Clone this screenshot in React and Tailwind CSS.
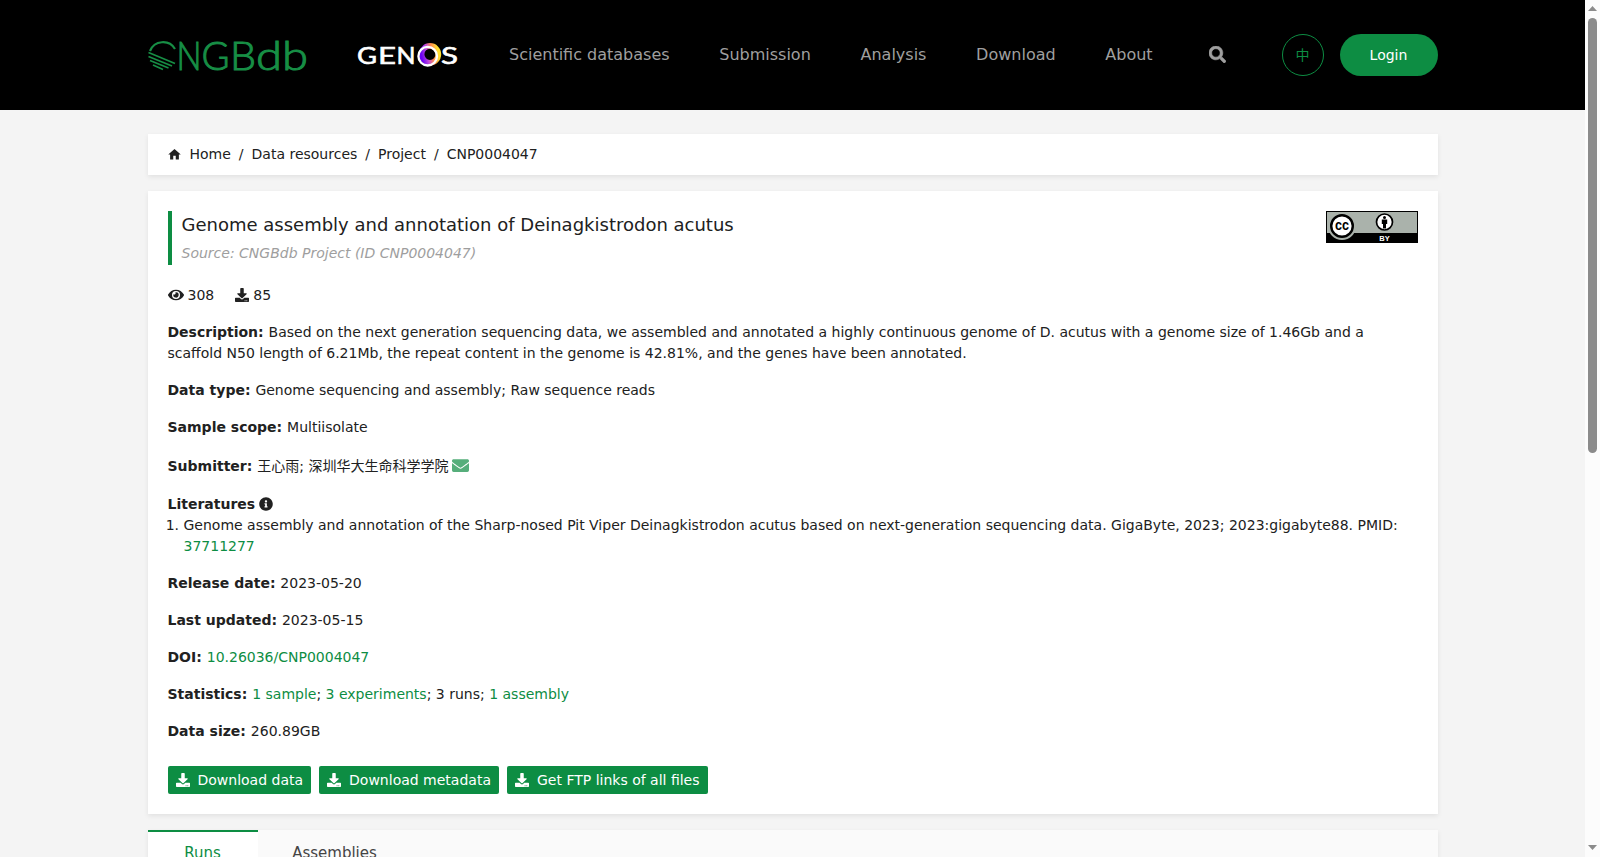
import { FaSearch, FaEye, FaDownload, FaEnvelope, FaInfoCircle } from 'react-icons/fa';
import { MdHome } from 'react-icons/md';

const navItems = ['Scientific databases', 'Submission', 'Analysis', 'Download', 'About'];
const crumbs = ['Home', 'Data resources', 'Project', 'CNP0004047'];
const downloads = ['Download data', 'Download metadata', 'Get FTP links of all files'];

function CngbLogo() {
  return (
    <svg className="h-[32px] w-[160px] shrink-0 overflow-visible" viewBox="0 0 160 32" aria-label="CNGBdb">
      <g fill="none" stroke="#178e45">
        <path strokeWidth="2.2" d="M2 12 A14 14 0 0 1 27 10" />
        <path strokeWidth="1.7" d="M0.500 13.500 L27 24.500 M0.500 17.500 L24 27 M2 21.500 L20.500 29 M5 26 L15 30.500" />
      </g>
      <g fill="#178e45" fontFamily="Lato" fontWeight="300" fontSize="40" stroke="#178e45" strokeWidth="1">
        <text x="28.5" y="31" textLength="25" lengthAdjust="spacingAndGlyphs">N</text>
        <text x="53.5" y="31" textLength="28" lengthAdjust="spacingAndGlyphs">G</text>
        <text x="82" y="31" textLength="26" lengthAdjust="spacingAndGlyphs">B</text>
        <text x="108" y="31" textLength="52" lengthAdjust="spacingAndGlyphs">db</text>
      </g>
    </svg>
  );
}

function GenosLogo() {
  return (
    <svg className="h-[28px] w-[101px] shrink-0 overflow-visible" viewBox="0 0 101 28" aria-label="GENOS">
      <defs>
        <linearGradient id="ring" x1="0" y1="0.6" x2="1" y2="0.4">
          <stop offset="0" stopColor="#6a00f4" />
          <stop offset="0.35" stopColor="#c04ad8" />
          <stop offset="0.65" stopColor="#ff8a50" />
          <stop offset="1" stopColor="#ffe030" />
        </linearGradient>
      </defs>
      <g fill="#fff" stroke="#fff" strokeWidth="0.6" fontFamily="Lato" fontWeight="400" fontSize="23.500">
        <text x="0" y="23" textLength="20" lengthAdjust="spacingAndGlyphs">G</text>
        <text x="21" y="23" textLength="18" lengthAdjust="spacingAndGlyphs">E</text>
        <text x="39.5" y="23" textLength="19" lengthAdjust="spacingAndGlyphs">N</text>
        <text x="84" y="23" textLength="17" lengthAdjust="spacingAndGlyphs">S</text>
      </g>
      <circle cx="73" cy="13.3" r="8.4" fill="none" stroke="url(#ring)" strokeWidth="5.6" />
      <circle cx="70.7" cy="15.2" r="9.3" fill="none" stroke="#fff" strokeWidth="2.3" />
    </svg>
  );
}

function CcBadge() {
  return (
    <svg className="h-[32px] w-[92px] shrink-0" viewBox="0 0 92 32" aria-label="CC BY">
      <rect width="92" height="32" fill="#000" />
      <rect x="1" y="1" width="90" height="21" fill="#aab2ab" />
      <circle cx="16" cy="15" r="14" fill="#aab2ab" />
      <circle cx="16" cy="15" r="10.8" fill="#fff" stroke="#000" strokeWidth="2.4" />
      <text x="9" y="19" textLength="14" lengthAdjust="spacingAndGlyphs" fontFamily="Liberation Sans" fontWeight="700" fontSize="14">cc</text>
      <circle cx="58.5" cy="11" r="8" fill="#fff" stroke="#000" strokeWidth="1.7" />
      <circle cx="58.5" cy="6.5" r="1.5" />
      <path d="M55.800 8.500h5.400v4.500h-1.200v4.500h-3V13H55.800z" />
      <text x="58.5" y="30" textAnchor="middle" fill="#fff" fontFamily="Liberation Sans" fontWeight="700" fontSize="7.5">BY</text>
    </svg>
  );
}

function Row({ label, children }) {
  return (
    <p className="mb-4">
      <b>{label}: </b>
      {children}
    </p>
  );
}

function Link({ children }) {
  return <a className="text-[#0d8d43]">{children}</a>;
}

function Header() {
  return (
    <header className="h-[110px] bg-black">
      <div className="mx-auto flex h-full w-[1290px] items-center">
        <CngbLogo />
        <div className="ml-[49px]">
          <GenosLogo />
        </div>
        <nav className="ml-[51.5px] flex gap-[49.7px] text-base text-[#9f9f9f]">
          {navItems.map(item => (
            <a key={item}>{item}</a>
          ))}
        </nav>
        <FaSearch className="mb-px ml-[56px] size-[17px] text-[#9f9f9f]" stroke="currentColor" strokeWidth="18" />
        <div className="ml-auto flex gap-4">
          <button className="size-[42px] rounded-full border border-[#0d8d43] text-sm text-[#0d8d43]">中</button>
          <button className="h-[42px] w-[98px] rounded-full bg-[#0d8d43] text-sm text-white">Login</button>
        </div>
      </div>
    </header>
  );
}

function Scrollbar() {
  return (
    <div className="flex w-[15px] flex-col items-center justify-between bg-[#fcfcfc]">
      <div className="flex flex-col items-center">
        <svg className="h-[18px] w-[9px]" viewBox="0 0 9 18">
          <path d="M0 11h9L4.500 6z" fill="#8b8b8b" />
        </svg>
        <div className="h-[435px] w-[9px] rounded-full bg-[#8b8b8b]" />
      </div>
      <svg className="h-[17px] w-[9px]" viewBox="0 0 9 17">
        <path d="M0 5h9L4.500 10z" fill="#8b8b8b" />
      </svg>
    </div>
  );
}

export default function App() {
  return (
    <div className="flex h-[857px] overflow-hidden bg-[#f4f4f4] font-['DejaVu_Sans','Noto_Sans_CJK_SC',sans-serif] text-sm leading-[21px] text-[#212121]">
      <div className="w-[1585px]">
        <Header />
        <main className="mx-auto w-[1290px] pt-6">
          <div className="flex h-[41px] items-center bg-white px-5 shadow-[0_2px_5px_rgba(0,0,0,0.08)]">
            <MdHome className="mr-2 -ml-px size-[15px]" />
            {crumbs.map((crumb, i) => (
              <span key={crumb}>
                {i > 0 && <span className="mx-2">/</span>}
                {crumb}
              </span>
            ))}
          </div>

          <section className="mt-4 h-[623px] bg-white p-5 shadow-[0_2px_5px_rgba(0,0,0,0.08)]">
            <div className="flex items-start justify-between">
              <div className="h-[54px] border-l-4 border-[#0d8d43] pl-[10px]">
                <h1 className="text-lg leading-[27px]">Genome assembly and annotation of Deinagkistrodon acutus</h1>
                <p className="mt-[5px] italic text-[#9e9e9e]">Source: CNGBdb Project (ID CNP0004047)</p>
              </div>
              <CcBadge />
            </div>

            <div className="mt-5 mb-4 flex items-center">
              <FaEye className="mr-1 mb-0.5 size-4" />
              308
              <FaDownload className="mr-1 mb-0.5 ml-[21px] size-[14px]" />
              85
            </div>

            <Row label="Description">
              Based on the next generation sequencing data, we assembled and annotated a highly continuous genome of D. acutus with a genome size of 1.46Gb and a scaffold N50 length of 6.21Mb, the repeat content in the genome is 42.81%, and the genes have been annotated.
            </Row>
            <Row label="Data type">Genome sequencing and assembly; Raw sequence reads</Row>
            <Row label="Sample scope">Multiisolate</Row>
            <div className="mb-4 flex h-6 items-center pt-px">
              <b className="mr-[5px]">Submitter:</b>
              王心雨; 深圳华大生命科学学院
              <FaEnvelope className="mb-0.5 ml-[3px] size-[17px] text-[#56ae7b]" />
            </div>
            <div className="flex items-center">
              <b>Literatures</b>
              <FaInfoCircle className="mb-0.5 ml-1 size-[14px]" />
            </div>
            <ol className="mb-4 list-decimal pl-4">
              <li>
                Genome assembly and annotation of the Sharp-nosed Pit Viper Deinagkistrodon acutus based on next-generation sequencing data. GigaByte, 2023; 2023:gigabyte88. PMID: <Link>37711277</Link>
              </li>
            </ol>
            <Row label="Release date">2023-05-20</Row>
            <Row label="Last updated">2023-05-15</Row>
            <Row label="DOI"><Link>10.26036/CNP0004047</Link></Row>
            <Row label="Statistics">
              <Link>1 sample</Link>; <Link>3 experiments</Link>; 3 runs; <Link>1 assembly</Link>
            </Row>
            <Row label="Data size">260.89GB</Row>

            <div className="mt-6 flex gap-2">
              {downloads.map(label => (
                <button key={label} className="flex h-7 items-center gap-2 rounded-xs bg-[#0d8d43] px-2 text-white">
                  <FaDownload className="mb-px size-[14px]" />
                  {label}
                </button>
              ))}
            </div>
          </section>

          <div className="mt-4 flex h-[60px] bg-[#fafafa] text-[15px] shadow-[0_2px_5px_rgba(0,0,0,0.08)]">
            <div className="w-[110px] border-t-2 border-[#0d8d43] bg-white pt-[11px] text-center text-[#0d8d43]">Runs</div>
            <div className="w-[154px] pt-[13px] text-center text-[#444]">Assemblies</div>
          </div>
        </main>
      </div>
      <Scrollbar />
    </div>
  );
}
